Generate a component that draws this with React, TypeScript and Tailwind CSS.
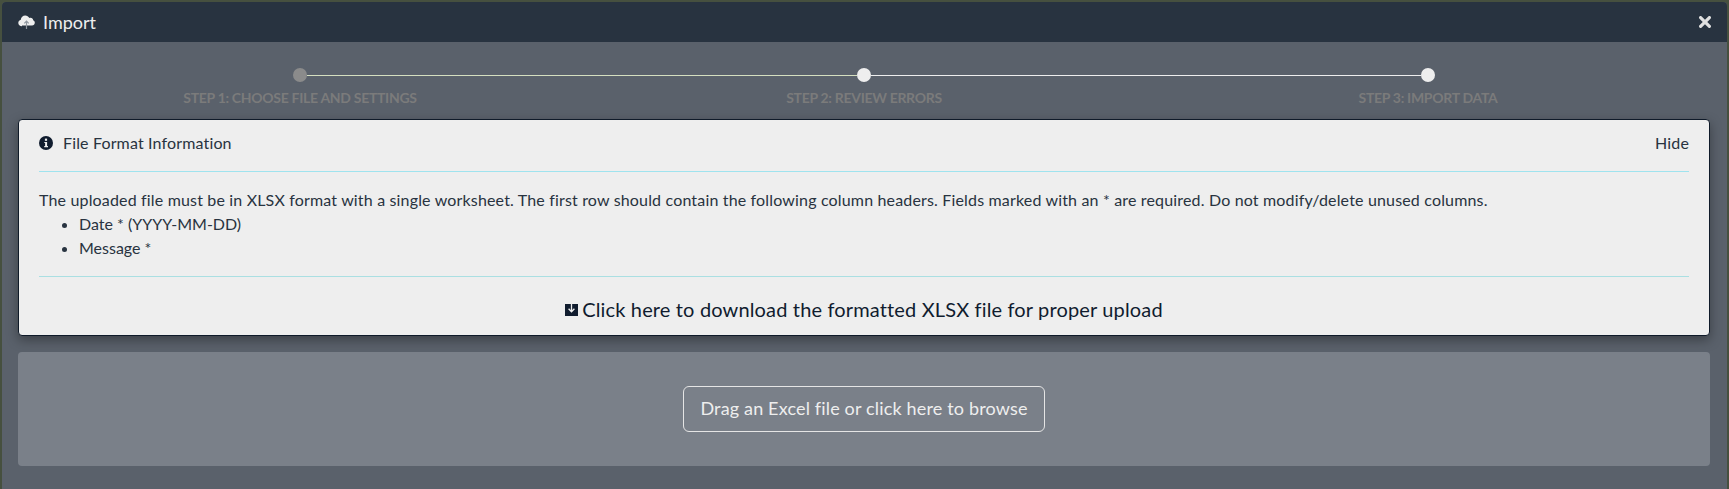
const steps = [
  { label: 'STEP 1: CHOOSE FILE AND SETTINGS', left: '', right: 'bg-[#d5dfc0]', dot: 'bg-[#8b8b8b]' },
  { label: 'STEP 2: REVIEW ERRORS', left: 'bg-[#d5dfc0]', right: 'bg-[#eeeeee]', dot: 'bg-[#eeeeee]' },
  { label: 'STEP 3: IMPORT DATA', left: 'bg-[#eeeeee]', right: '', dot: 'bg-[#eeeeee]' },
];

function CloudUpload() {
  return (
    <svg width="17" height="14" viewBox="0 0 17 14" className="shrink-0">
      <path d="M4 11.2C1.8 11.2 0.3 9.8 0.3 7.9c0-1.6 1-2.8 2.5-3.2C3 2.2 4.9 0.5 7.2 0.5c1.8 0 3.3 1 4.1 2.5 .4-.2.8-.2 1.2-.2 1.5 0 2.6 1.1 2.7 2.5 1 .4 1.6 1.3 1.6 2.4 0 1.5-1.2 2.7-2.8 2.7H4z" fill="#eeeeee" />
      <path d="M8.5 14V6.5M6.3 8.4l2.2-2.3 2.2 2.3" stroke="#8f969e" strokeWidth="1.2" fill="none" />
    </svg>
  );
}

function CloseGlyph() {
  return (
    <svg width="12" height="12" viewBox="0 0 12 12" className="shrink-0">
      <path d="M1.6 1.6l8.8 8.8M10.4 1.6l-8.8 8.8" stroke="#e0e0e0" strokeWidth="3.2" strokeLinecap="round" />
    </svg>
  );
}

function InfoCircle() {
  return (
    <svg width="14" height="14" viewBox="0 0 14 14" className="mr-[10px] shrink-0">
      <circle cx="7" cy="7" r="7" fill="#101c2e" />
      <rect x="5.9" y="2.6" width="2.2" height="2.2" fill="#eeeeee" />
      <path d="M5.3 5.9h2.8v4.2h.9v1.2H5.2v-1.2h.9V7.1h-.8z" fill="#eeeeee" />
    </svg>
  );
}

function DownloadSquare() {
  return (
    <svg width="13" height="13" viewBox="0 0 13 13" className="shrink-0">
      <rect x="0" y="1" width="13" height="12" fill="#101c2e" />
      <path d="M6.5 0v8M3.6 5.8l2.9 3 2.9-3" stroke="#eeeeee" strokeWidth="1.3" fill="none" />
    </svg>
  );
}

export default function App() {
  return (
    <div className="h-[489px] w-[1729px] overflow-hidden bg-[#46503f] px-[2px] pt-[2px] font-['Lato',sans-serif]">
      <div className="h-full rounded-t-[4px] bg-[#5a616b]">
        <div className="flex h-[40px] items-center rounded-t-[4px] bg-[#283340] pl-[16px] pr-[16px] text-[#eeeeee]">
          <CloudUpload />
          <span className="ml-[8px] text-[18px]">Import</span>
          <div className="ml-auto"><CloseGlyph /></div>
        </div>

        <div className="pl-[16px] pr-[17px]">
          <div className="grid grid-cols-3 pt-[26px]">
            {steps.map((s) => (
              <div key={s.label} className="flex flex-col items-center">
                <div className="flex h-[14px] w-full items-center">
                  <div className={`h-px flex-1 ${s.left}`} />
                  <div className={`h-[14px] w-[14px] rounded-full ${s.dot}`} />
                  <div className={`h-px flex-1 ${s.right}`} />
                </div>
                <div className="mt-[6px] text-[14px] leading-[20px] font-bold tracking-[-0.3px] text-[#7b7b7b]">{s.label}</div>
              </div>
            ))}
          </div>

          <div className="mt-[11px] h-[217px] rounded-[4px] border border-[#0f1a29] bg-[#eeeeee] px-[20px] text-[#283340] shadow-[0_4px_12px_rgba(0,0,0,0.35)]">
            <div className="flex h-[52px] items-center border-b border-[#9fe3ee] pb-[6px] text-[16px] tracking-[0.15px]">
              <InfoCircle />
              <span>File Format Information</span>
              <span className="ml-auto">Hide</span>
            </div>
            <p className="mt-[16px] text-[16px] leading-[24px] tracking-[0.165px]">
              The uploaded file must be in XLSX format with a single worksheet. The first row should contain the following column headers. Fields marked with an * are required. Do not modify/delete unused columns.
            </p>
            <ul className="list-disc pl-[40px] text-[16px] leading-[24px]">
              <li>Date * (YYYY-MM-DD)</li>
              <li>Message *</li>
            </ul>
            <div className="mt-[16px] border-t border-[#aadfe2]" />
            <div className="flex h-[58px] items-center justify-center gap-[4px] pt-[6px] text-[20px] tracking-[0.15px] text-[#101c2e]">
              <DownloadSquare />
              <span>Click here to download the formatted XLSX file for proper upload</span>
            </div>
          </div>

          <div className="mt-[16px] flex h-[114px] items-center justify-center rounded-[4px] bg-[#7a8089] pb-[1px]">
            <div className="flex h-[46px] w-[362px] items-center justify-center rounded-[6px] border border-[#e5e5e5] text-[18px] tracking-[0.16px] text-[#eeeeee]">
              Drag an Excel file or click here to browse
            </div>
          </div>
        </div>
      </div>
    </div>
  );
}
